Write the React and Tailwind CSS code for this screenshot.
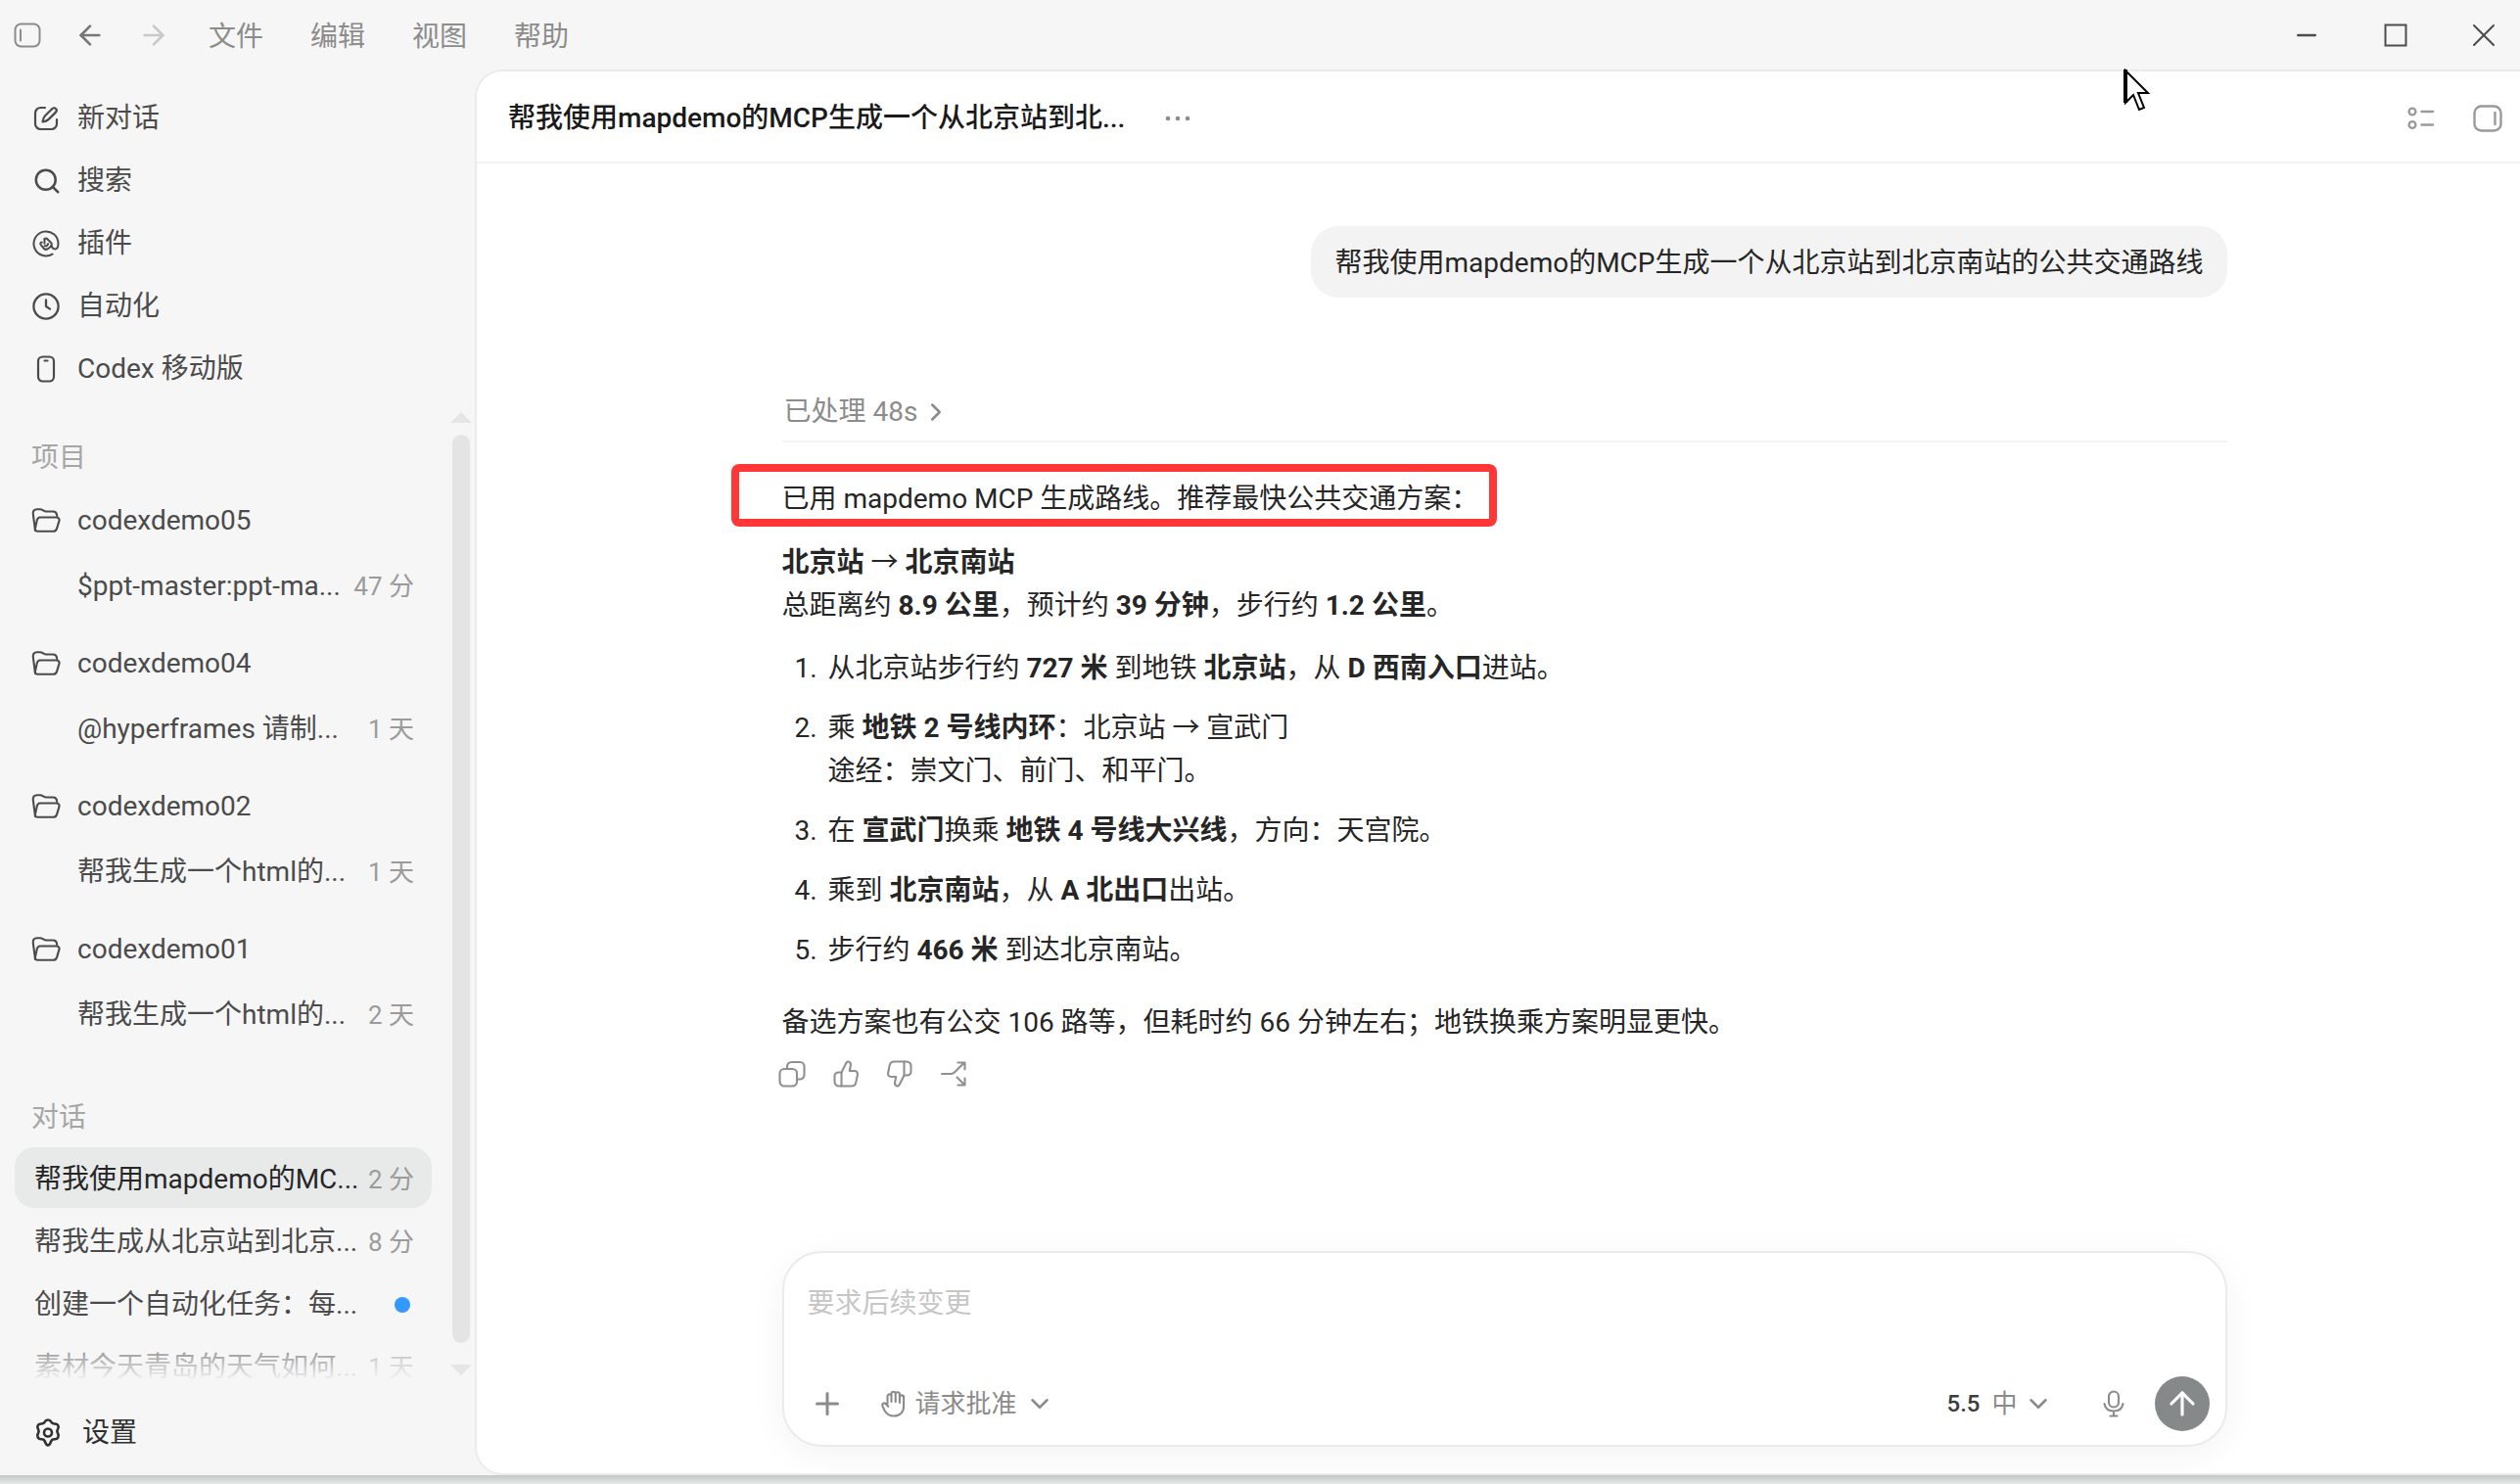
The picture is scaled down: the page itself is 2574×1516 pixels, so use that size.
import { useState } from 'react'
import { ArrowLeft, ArrowRight, ArrowUp, ChevronDown, ChevronRight, Minus, Plus, Search } from 'lucide-react'

const Svg = ({ size = 30, box = 24, width = 2, className = '', children }) => (
  <svg
    width={size}
    height={size}
    viewBox={`0 0 ${box} ${box}`}
    fill="none"
    stroke="currentColor"
    strokeWidth={width}
    strokeLinecap="round"
    strokeLinejoin="round"
    className={`shrink-0 ${className}`}
    aria-hidden="true"
  >
    {children}
  </svg>
)

const PanelLeftIcon = () => (
  <Svg size={28} box={28}>
    <rect x="1.5" y="2.5" width="25" height="23" rx="6" />
    <path d="M7 8.500v11" />
  </Svg>
)

const PanelRightIcon = () => (
  <Svg size={30} box={30} width={2.400}>
    <rect x="1.5" y="2.5" width="27" height="25" rx="7" />
    <path d="M22.500 9v12" />
  </Svg>
)

const ComposeIcon = () => (
  <Svg size={28} box={28} width={2.200}>
    <path d="M13 3H8.500A5.500 5.500 0 0 0 3 8.500v11A5.500 5.500 0 0 0 8.500 25h11a5.500 5.500 0 0 0 5.500-5.500V15" />
    <path d="M10.500 17.500c.3-2.800 1-4.600 2.600-6.200l7.300-7.300a2.500 2.500 0 0 1 3.600 3.600l-7.300 7.300c-1.600 1.600-3.400 2.300-6.200 2.600Z" />
  </Svg>
)

const PluginIcon = () => (
  <Svg size={28} box={28}>
    <path d="M20.500 24.600A12.500 12.500 0 1 1 26.500 14c0 3.400-1.200 5.400-3.400 5.400-1.700 0-2.700-1.200-3.900-3.400" />
    <path d="M12.500 9.200c1-1.200 2.600-1 3.100.4l3.400 3.200c1.400 1.400 1 3.400-.6 4.400l-2.600 2c-1.600 1-3.200.8-4.200-.6l-3-3.800c-.8-1.200 0-2.200 1.200-2.200" />
    <path d="M12.500 9.200v4.600M12.600 16.200c1.600.4 3.200-.4 3.600-2.200" />
  </Svg>
)

const ClockIcon = () => (
  <Svg size={28} box={28} width={2.300}>
    <circle cx="14" cy="14" r="12.600" />
    <path d="M14 7.500V14l4 2.600" />
  </Svg>
)

const PhoneIcon = () => (
  <Svg size={28} box={28} width={2.200}>
    <rect x="6" y="1.500" width="16" height="25" rx="4.500" />
    <path d="M12.500 5.500h3" />
  </Svg>
)

const FolderIcon = () => (
  <Svg size={30} box={30} width={2.100}>
    <path d="M4 25 1.800 8.200C1.400 5 3 3.200 5.800 3.200h3c3 0 3.600 2.300 6.600 2.300H22c2.600 0 4 1.300 4.200 4.500" />
    <path d="M9 11.500h16.500c2.400 0 3.500 1.600 2.900 3.600l-2.300 7.800c-.6 2-1.700 2.900-3.600 2.900H6.600c-2.200 0-3-1.400-2.500-3.400l1.700-8c.5-2 1.400-2.900 3.200-2.900Z" />
  </Svg>
)

const GearIcon = () => (
  <Svg size={32} box={32} width={2.600}>
    <path d="M16 2.500c2 0 2.600.8 3.300 2.200.7 1.300 1.700 1.900 3.200 1.800 1.600-.1 2.800 0 3.800 1.700s.5 2.800-.4 4.100c-.8 1.300-.8 2.400 0 3.700l.2.300c.8 1.300 1.100 2.400.2 4.200-1 1.700-2.200 1.900-3.800 1.800-1.500-.1-2.500.5-3.200 1.800-.7 1.400-1.300 4.400-3.300 4.400s-2.600-3-3.300-4.400c-.7-1.300-1.700-1.900-3.200-1.800-1.600.1-2.800-.1-3.800-1.800-.9-1.800-.6-2.900.2-4.200l.2-.3c.8-1.300.8-2.400 0-3.700-.9-1.300-1.400-2.400-.4-4.100s2.200-1.800 3.800-1.700c1.500.1 2.500-.5 3.200-1.800C13.400 3.300 14 2.500 16 2.500Z" />
    <circle cx="16" cy="15.500" r="4" />
  </Svg>
)

const SummaryIcon = () => (
  <Svg size={30} box={30} width={2.400}>
    <circle cx="6" cy="8" r="3.400" />
    <circle cx="6" cy="21.500" r="3.400" />
    <path d="M15.500 8H27M15.500 21.500H27" />
  </Svg>
)

const CopyIcon = () => (
  <Svg size={28} box={28} width={2.100}>
    <rect x="1.500" y="9" width="17.500" height="17.500" rx="4.500" />
    <path d="M9 9V6.500A4.500 4.500 0 0 1 13.500 2H22a4.500 4.500 0 0 1 4.500 4.500V15a4.500 4.500 0 0 1-4.500 4.500h-3" />
  </Svg>
)

const ThumbIcon = ({ className }) => (
  <Svg size={28} box={28} width={2.100} className={className}>
    <path d="M9.500 12.500 14.300 3c.8-1.500 2-1.800 3.200-1.100 1.400.8 1.700 2 1.400 3.500L17.800 11h4.700c2.600 0 3.900 1.500 3.400 4l-1.500 7.400c-.5 2.700-2 4.100-4.700 4.100H7a4.500 4.500 0 0 1-4.500-4.500v-5.500c0-2.700 1.600-4 4.300-4Z" />
    <path d="M9.500 12.500v14" />
  </Svg>
)

const ForkIcon = () => (
  <Svg size={28} box={28} width={2.100}>
    <path d="M2 14h9.500c1.600 0 2.400-.4 3.400-1.400L25 2.500M18.500 2.500h7v7" />
    <path d="M17.500 17.500l8 8M25.500 18.500v7h-7" />
  </Svg>
)

const HandIcon = () => (
  <Svg size={28} box={28} width={2.100}>
    <path d="M7.500 14V6.400a2 2 0 0 1 4 0V12M11.500 11.500V3.800a2.100 2.100 0 0 1 4.200 0V12M15.700 12V4.400a2.100 2.100 0 0 1 4.200 0V13M19.900 12.500V7.500a2.100 2.100 0 0 1 4.200 0V16c0 6.500-3.900 10.500-10 10.500-4.500 0-7.500-2-9.500-5.500L2.500 16.500C1.500 14 4.200 12.300 6 14.200l2.300 2.600" />
  </Svg>
)

const MicIcon = () => (
  <Svg size={28} box={28} width={2.100}>
    <rect x="9" y="1.500" width="10" height="16" rx="5" />
    <path d="M4.500 14c.9 4.800 4.600 7.500 9.500 7.500s8.600-2.700 9.500-7.500M14 21.500v5M10.500 26.500h7" />
  </Svg>
)

const menus = ['文件', '编辑', '视图', '帮助']

const navItems = [
  { label: '新对话', icon: <ComposeIcon /> },
  { label: '搜索', icon: <Search size={30} strokeWidth={2} className="-mr-[2px]" /> },
  { label: '插件', icon: <PluginIcon /> },
  { label: '自动化', icon: <ClockIcon /> },
  { label: 'Codex 移动版', icon: <PhoneIcon /> }
]

const projects = [
  { name: 'codexdemo05', thread: '$ppt-master:ppt-ma...', time: '47 分' },
  { name: 'codexdemo04', thread: '@hyperframes 请制...', time: '1 天' },
  { name: 'codexdemo02', thread: '帮我生成一个html的...', time: '1 天' },
  { name: 'codexdemo01', thread: '帮我生成一个html的...', time: '2 天' }
]

const chats = [
  { title: '帮我使用mapdemo的MC...', time: '2 分' },
  { title: '帮我生成从北京站到北京...', time: '8 分' },
  { title: '创建一个自动化任务：每...', unread: true },
  { title: '素材今天青岛的天气如何...', time: '1 天' }
]

const TitleBar = () => (
  <header className="flex h-[71px] shrink-0 items-center justify-between pl-[14px] pr-[23px] text-[#8c8c8c]">
    <div className="flex items-center">
      <button type="button" aria-label="切换侧边栏">
        <PanelLeftIcon />
      </button>
      <button type="button" aria-label="后退" className="ml-[34px] text-[#777777]">
        <ArrowLeft size={32} strokeWidth={2} />
      </button>
      <button type="button" aria-label="前进" className="ml-[33px] text-[#c9c9c9]">
        <ArrowRight size={32} strokeWidth={2} />
      </button>
      <nav className="ml-10 flex gap-12 pt-1">
        {menus.map((menu) => (
          <button key={menu} type="button">{menu}</button>
        ))}
      </nav>
    </div>
    <div className="flex items-center gap-[62px] text-[#4d4d4d]">
      <button type="button" aria-label="最小化">
        <Minus size={30} strokeWidth={2} />
      </button>
      <button type="button" aria-label="最大化">
        <Svg size={28} box={28}>
          <rect x="3.500" y="3.500" width="21" height="21" strokeLinejoin="miter" />
        </Svg>
      </button>
      <button type="button" aria-label="关闭">
        <Svg size={28} box={28}>
          <path d="M4 4l20 20M24 4 4 24" />
        </Svg>
      </button>
    </div>
  </header>
)

const Sidebar = () => {
  const [active, setActive] = useState(0)

  return (
    <aside className="flex w-[485px] shrink-0 flex-col text-[#4b4b4b]">
      <nav className="flex flex-col pt-4">
        {navItems.map((item) => (
          <button key={item.label} type="button" className="flex h-16 items-center gap-[18px] pt-[3px] pl-[33px]">
            {item.icon}
            <span>{item.label}</span>
          </button>
        ))}
      </nav>

      <div className="relative flex min-h-0 flex-1 justify-between">
        <div className="flex w-[441px] flex-col overflow-hidden pl-[15px]">
          <h2 className="mt-[27px] flex h-16 shrink-0 items-center pt-[3px] pl-[17px] text-[#a6a6a6]">项目</h2>
          {projects.map((project) => (
            <div key={project.name} className="mb-3 shrink-0">
              <button type="button" className="flex h-[67px] w-full items-center gap-[17px] pl-[17px]">
                <FolderIcon />
                <span>{project.name}</span>
              </button>
              <button type="button" className="flex h-[67px] w-full items-center justify-between pl-16 pr-[18px]">
                <span>{project.thread}</span>
                <span className="text-[26px] text-[#9b9b9b]">{project.time}</span>
              </button>
            </div>
          ))}
          <h2 className="mt-[26px] flex h-16 shrink-0 items-center pt-[3px] pl-[17px] text-[#a6a6a6]">对话</h2>
          {chats.map((chat, i) => (
            <button
              key={chat.title}
              type="button"
              onClick={() => setActive(i)}
              className={`mb-[2px] flex h-[62px] w-full shrink-0 items-center justify-between rounded-[20px] pt-[3px] pl-5 pr-[18px] ${active === i ? 'bg-[#e8eaea] text-[#262626]' : ''}`}
            >
              <span>{chat.title}</span>
              {chat.unread
                ? <span className="mr-1 size-4 rounded-full bg-[#3399ff]" />
                : <span className="text-[26px] text-[#9b9b9b]">{chat.time}</span>}
            </button>
          ))}
        </div>

        {/* Scroll bar */}
        <div className="flex flex-col items-center pr-[3px] pt-[14px] pb-3 text-[#e5e5e5]">
          <svg width="22" height="11" viewBox="0 0 22 11" fill="currentColor" aria-hidden="true"><path d="M11 0 22 11H0Z" /></svg>
          <div className="my-3 w-[18px] flex-1 rounded-full bg-[#e4e4e4]" />
          <svg width="22" height="11" viewBox="0 0 22 11" fill="currentColor" className="mt-[10px]" aria-hidden="true"><path d="M0 0h22L11 11Z" /></svg>
        </div>

        <div className="absolute bottom-0 left-0 h-10 w-[450px] bg-gradient-to-t from-[#f6f6f6] from-15% to-[#f6f6f6]/40" />
      </div>

      <button type="button" className="flex h-[90px] shrink-0 items-center gap-[19px] pt-[3px] pl-[33px] text-[#303030]">
        <GearIcon />
        <span>设置</span>
      </button>
    </aside>
  )
}

const Answer = () => (
  <article className="mt-9 leading-[44px]">
    <p className="relative">
      已用 mapdemo MCP 生成路线。推荐最快公共交通方案：
      <span className="absolute -top-[14px] -left-[52px] h-16 w-[782px] rounded-lg border-8 border-[#ff3737]" />
    </p>
    <p className="mt-[21px]">
      <strong>北京站 <span className="font-normal">→</span> 北京南站</strong>
      <br />
      总距离约 <strong>8.9 公里</strong>，预计约 <strong>39 分钟</strong>，步行约 <strong>1.2 公里</strong>。
    </p>
    <ol className="mt-5 flex list-decimal flex-col gap-[17px] pl-[43px]">
      <li className="pl-1">从北京站步行约 <strong>727 米</strong> 到地铁 <strong>北京站</strong>，从 <strong>D 西南入口</strong>进站。</li>
      <li className="pl-1">
        乘 <strong>地铁 2 号线内环</strong>：北京站 → 宣武门
        <br />
        途经：崇文门、前门、和平门。
      </li>
      <li className="pl-1">在 <strong>宣武门</strong>换乘 <strong>地铁 4 号线大兴线</strong>，方向：天宫院。</li>
      <li className="pl-1">乘到 <strong>北京南站</strong>，从 <strong>A 北出口</strong>出站。</li>
      <li className="pl-1">步行约 <strong>466 米</strong> 到达北京南站。</li>
    </ol>
    <p className="mt-[30px]">备选方案也有公交 106 路等，但耗时约 66 分钟左右；地铁换乘方案明显更快。</p>
    <div className="mt-4 -ml-1 flex gap-[27px] text-[#8f8f8f]">
      <button type="button" aria-label="复制"><CopyIcon /></button>
      <button type="button" aria-label="赞"><ThumbIcon /></button>
      <button type="button" aria-label="踩"><ThumbIcon className="rotate-180" /></button>
      <button type="button" aria-label="分支"><ForkIcon /></button>
    </div>
  </article>
)

const Composer = () => {
  const [text, setText] = useState('')

  return (
    <form
      onSubmit={(e) => e.preventDefault()}
      className="mb-[27px] flex h-[200px] shrink-0 flex-col justify-between rounded-[40px] border-2 border-[#ebebeb] bg-white pt-[30px] pr-4 pb-[14px] pl-6 shadow-[0_8px_36px_rgba(0,0,0,0.05)]"
    >
      <textarea
        rows={1}
        aria-label="要求后续变更"
        placeholder="要求后续变更"
        value={text}
        onChange={(e) => setText(e.target.value)}
        className="h-11 resize-none leading-[44px] outline-none placeholder:text-[#c6c6c6]"
      />
      <div className="flex items-center justify-between text-[26px] text-[#8b8b8b]">
        <div className="flex items-center gap-9">
          <button type="button" aria-label="添加" className="pl-[2px]">
            <Plus size={36} strokeWidth={2} />
          </button>
          <button type="button" className="flex items-center gap-2">
            <HandIcon />
            <span>请求批准</span>
            <ChevronDown size={30} strokeWidth={2} />
          </button>
        </div>
        <div className="flex items-center">
          <button type="button" className="flex items-center gap-[6px]">
            <span className="mr-[6px] text-2xl font-medium text-[#3c3c3c]">5.5</span>
            <span>中</span>
            <ChevronDown size={30} strokeWidth={2} />
          </button>
          <button type="button" aria-label="语音" className="ml-12">
            <MicIcon />
          </button>
          <button type="submit" aria-label="发送" className="ml-7 flex size-14 items-center justify-center rounded-full bg-[#868989] text-white">
            <ArrowUp size={38} strokeWidth={2} />
          </button>
        </div>
      </div>
    </form>
  )
}

const Main = () => (
  <main className="flex min-w-0 flex-1 flex-col overflow-hidden rounded-l-[28px] border-2 border-r-0 border-[#ebebeb] bg-white text-[#262626]">
    <div className="flex h-[94px] shrink-0 items-center justify-between border-b-2 border-[#f2f2f2] pt-[3px] pr-[18px] pl-8">
      <div className="flex items-center gap-10">
        <h1 className="font-medium text-[#1a1a1a]">帮我使用mapdemo的MCP生成一个从北京站到北...</h1>
        <button type="button" aria-label="更多" className="text-[#8c8c8c]">
          <svg width="28" height="28" viewBox="0 0 28 28" fill="currentColor" aria-hidden="true">
            <circle cx="4" cy="14" r="2.300" />
            <circle cx="14" cy="14" r="2.300" />
            <circle cx="24" cy="14" r="2.300" />
          </svg>
        </button>
      </div>
      <div className="flex items-center gap-[38px] text-[#9a9a9a]">
        <button type="button" aria-label="摘要"><SummaryIcon /></button>
        <button type="button" aria-label="切换右侧面板"><PanelRightIcon /></button>
      </div>
    </div>

    <div className="flex flex-1 flex-col pr-4 pl-7">
      <div className="mx-auto flex w-full max-w-[1476px] flex-1 flex-col">
        <div className="mt-16 flex h-[73px] shrink-0 items-center self-end rounded-[28px] bg-[#f3f3f3] px-6 pt-[3px]">
          帮我使用mapdemo的MCP生成一个从北京站到北京南站的公共交通路线
        </div>
        <div className="mt-[84px] flex h-16 items-center border-b-2 border-[#f4f4f4] pt-[3px] pl-[2px]">
          <button type="button" className="flex items-center gap-1 text-[#8c8c8c]">
            已处理 48s
            <ChevronRight size={30} strokeWidth={2} />
          </button>
        </div>
        <Answer />
        <div className="flex-1" />
        <Composer />
      </div>
    </div>
  </main>
)

const App = () => (
  <div className="relative flex h-screen flex-col bg-[#f6f6f6] font-['Roboto','Noto_Sans_CJK_SC',sans-serif] text-[28px] leading-10">
    <TitleBar />
    <div className="flex min-h-0 flex-1">
      <Sidebar />
      <Main />
    </div>
    <div className="h-[9px] shrink-0 bg-gradient-to-b from-[#c3c7c7] to-[#e6e9e8]" />

    {/* Mouse pointer */}
    <svg width="28" height="46" viewBox="0 0 28 46" fill="#ffffff" stroke="#000000" strokeWidth="2" className="absolute top-[70px] right-[377px]" aria-hidden="true">
      <path d="M2 2v33l8-8 6 15 5-2-6-15h10Z" />
      <path d="M2 1v34" strokeWidth="4" />
    </svg>
  </div>
)

export default App
